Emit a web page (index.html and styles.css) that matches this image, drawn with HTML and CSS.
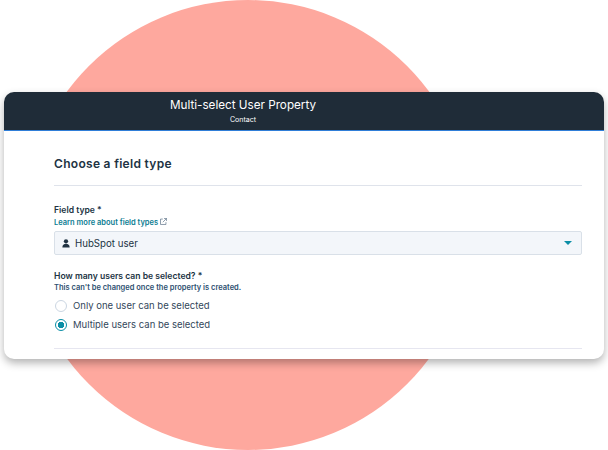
FILE: index.html
```html
<!DOCTYPE html>
<html lang="en">
<head>
    <meta charset="UTF-8">
    <meta name="viewport" content="width=device-width, initial-scale=1.0">
    <title>Multi-select User Property</title>
    <link rel="stylesheet" href="styles.css">
</head>
<body>
    <div class="circle"></div>
    <div class="card">
        <header class="card-header">
            <h1>Multi-select User Property</h1>
            <p>Contact</p>
        </header>
        <main class="card-body">
            <h2>Choose a field type</h2>
            <section class="field field-type">
                <label class="label">Field type *</label>
                <a class="help-link" href="#">Learn more about field types
                    <svg width="7" height="7" viewBox="0 0 8 8" fill="none" stroke="#5d7388" stroke-width="0.8">
                        <path d="M3.2 1.2H0.6V7.4H6.8V4.8"/>
                        <path d="M4.6 0.5H7.5V3.4M7.5 0.5L3.2 4.8"/>
                    </svg>
                </a>
                <div class="select">
                    <svg class="select-icon" width="8" height="9" viewBox="0 0 9 10" fill="#213343">
                        <circle cx="4.5" cy="2.6" r="2.4"/>
                        <path d="M0.4 9.6C0.4 6.8 2 5.4 4.5 5.4S8.6 6.8 8.6 9.6Z"/>
                    </svg>
                    <span>HubSpot user</span>
                    <i class="caret"></i>
                </div>
            </section>
            <section class="field">
                <label class="label">How many users can be selected? *</label>
                <p class="hint">This can't be changed once the property is created.</p>
                <div class="radio-row">
                    <i class="radio"></i>
                    <span>Only one user can be selected</span>
                </div>
                <div class="radio-row">
                    <i class="radio checked"></i>
                    <span>Multiple users can be selected</span>
                </div>
            </section>
            <hr class="rule-bottom">
        </main>
    </div>
</body>
</html>
```

FILE: styles.css
```css
/* base */
html, body {
    margin: 0;
    padding: 0;
    height: 100%;
    overflow: hidden;
    background-color: #fff;
    font-family: Inter, "Liberation Sans", sans-serif;
}

body {
    position: relative;
    padding: 92px 4px 0;
    box-sizing: border-box;
}

.circle {
    position: absolute;
    left: 23px;
    top: 0;
    width: 450px;
    height: 450px;
    border-radius: 50%;
    background-color: #fea89e;
}

/* card */
.card {
    position: relative;
    width: 600px;
    height: 267px;
    background-color: #fff;
    border-radius: 10px;
    box-shadow: 0 4px 8px rgba(0, 0, 0, 0.3);
    overflow: hidden;
}

.card-header {
    height: 39px;
    box-sizing: border-box;
    padding: 5px 122px 0 0;
    background-color: #1f2c38;
    border-bottom: 1px solid #2f7ed8;
    color: #fff;
    text-align: center;
}

.card-header h1 {
    margin: 0;
    font-size: 11.7px;
    font-weight: 400;
    line-height: 16px;
}

.card-header p {
    margin: 2px 0 0;
    font-size: 7px;
    line-height: 9px;
}

.card-body {
    padding: 25px 22px 0 50px;
    color: #213343;
}

.card-body h2 {
    margin: 0;
    padding-bottom: 13px;
    font-size: 12px;
    font-weight: 600;
    line-height: 16px;
    letter-spacing: 0.3px;
    border-bottom: 1px solid #dfe3eb;
}

/* fields */
.field-type {
    margin-top: 18px;
}

.field {
    display: flex;
    flex-direction: column;
}

.label {
    font-size: 8.6px;
    font-weight: 600;
    line-height: 12px;
}

.help-link {
    margin-top: 2px;
    font-size: 7.5px;
    font-weight: 600;
    line-height: 10px;
    color: #0b7d92;
    text-decoration: none;
}

.select {
    display: flex;
    align-items: center;
    height: 24px;
    margin-top: 3px;
    margin-bottom: 15px;
    padding: 0 9px 0 7px;
    box-sizing: border-box;
    background-color: #f3f6fa;
    border: 1px solid #d9e0e8;
    border-radius: 2px;
    font-size: 9.7px;
}

.select-icon {
    margin-right: 5px;
}

.caret {
    margin-left: auto;
    border-top: 4px solid #0b8ea6;
    border-left: 4px solid transparent;
    border-right: 4px solid transparent;
}

.hint {
    margin: 1px 0 0;
    font-size: 7.5px;
    font-weight: 600;
    line-height: 10px;
    color: #2d4f70;
}

.radio-row {
    display: flex;
    align-items: center;
    gap: 6px;
    height: 19px;
    font-size: 9.5px;
    color: #33475b;
}

.radio {
    width: 10px;
    height: 10px;
    margin-left: 1px;
    border: 1px solid #cbd6e2;
    border-radius: 50%;
    background-color: #fff;
    flex-shrink: 0;
}

.radio.checked {
    border-color: #0b8ea6;
    background: radial-gradient(circle, #0b8ea6 0 3px, #fff 3.5px);
}

.hint + .radio-row {
    margin-top: 3px;
}

.rule-bottom {
    margin: 14px 0 0;
    border: 0;
    border-top: 1px solid #e6e6f0;
}
```
